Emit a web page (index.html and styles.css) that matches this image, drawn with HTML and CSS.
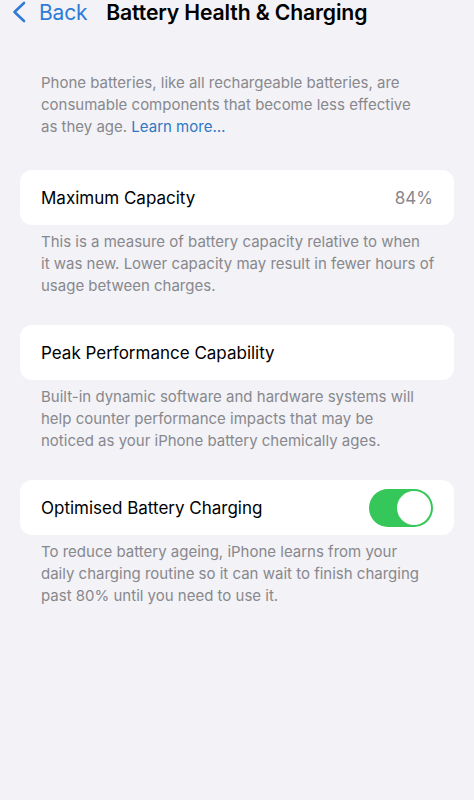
FILE: index.html
```html
<!DOCTYPE html>
<html lang="en">
  <head>
    <meta charset="UTF-8" />
    <meta name="viewport" content="width=device-width, initial-scale=1" />
    <title>Battery Health &amp; Charging</title>
    <link rel="stylesheet" href="styles.css">
  </head>
  <body>
    <header class="nav-bar">
      <a class="back-link" href="#">
        <svg class="chevron" width="16" height="22" viewBox="0 0 16 22">
          <path d="M13 2 L3.5 11 L13 20" fill="none" stroke="currentColor" stroke-width="2.6" stroke-linecap="round" stroke-linejoin="round" />
        </svg>
        <span>Back</span>
      </a>
      <h1 class="nav-title">Battery Health &amp; Charging</h1>
    </header>

    <main class="content">
      <p class="note intro">
        Phone batteries, like all rechargeable batteries, are<br>
        consumable components that become less effective<br>
        as they age. <a href="#" class="learn-more">Learn more…</a>
      </p>

      <section class="group">
        <div class="cell">
          <span class="cell-label">Maximum Capacity</span>
          <span class="cell-value">84%</span>
        </div>
        <p class="note">
          This is a measure of battery capacity relative to when<br>
          it was new. Lower capacity may result in fewer hours of<br>
          usage between charges.
        </p>
      </section>

      <section class="group">
        <div class="cell">
          <span class="cell-label">Peak Performance Capability</span>
        </div>
        <p class="note">
          Built-in dynamic software and hardware systems will<br>
          help counter performance impacts that may be<br>
          noticed as your iPhone battery chemically ages.
        </p>
      </section>

      <section class="group">
        <div class="cell">
          <span class="cell-label">Optimised Battery Charging</span>
          <span class="switch on"><span class="knob"></span></span>
        </div>
        <p class="note">
          To reduce battery ageing, iPhone learns from your<br>
          daily charging routine so it can wait to finish charging<br>
          past 80% until you need to use it.
        </p>
      </section>
    </main>
  </body>
</html>
```

FILE: styles.css
```css
* {
  box-sizing: border-box;
  margin: 0;
  padding: 0;
}
body {
  font-family: Inter, "Noto Sans", Arial, sans-serif;
  background: #f2f2f7;
  color: #000;
  min-height: 100vh;
}
a {
  text-decoration: none;
}
.nav-bar {
  display: flex;
  align-items: center;
  height: 24px;
  padding-left: 11px;
}
.back-link {
  display: flex;
  align-items: center;
  gap: 12px;
  color: #2f7bd6;
  font-size: 21px;
  letter-spacing: -0.2px;
}
.chevron {
  display: block;
}
.nav-title {
  margin-left: 19px;
  font-size: 21.2px;
  font-weight: 600;
  letter-spacing: -0.15px;
}
.content {
  padding: 48px 20px 0;
}
.note {
  color: #88888d;
  font-size: 15px;
  line-height: 22px;
  padding: 0 8px 0 21px;
  white-space: nowrap;
}
.intro {
  margin-bottom: 32px;
}
.learn-more {
  color: #2f78c4;
}
.group {
  margin-bottom: 28px;
}
.cell {
  display: flex;
  align-items: center;
  justify-content: space-between;
  height: 55px;
  padding: 0 21px;
  background: #fff;
  border-radius: 12px;
  margin-bottom: 6px;
}
.cell-label {
  font-size: 17px;
}
.cell-value {
  font-size: 17px;
  color: #88888d;
}
.switch {
  position: relative;
  width: 64px;
  height: 38px;
  border-radius: 19px;
  background: #35c759;
}
.switch .knob {
  position: absolute;
  top: 2px;
  right: 2px;
  width: 34px;
  height: 34px;
  border-radius: 50%;
  background: #fff;
}
```
